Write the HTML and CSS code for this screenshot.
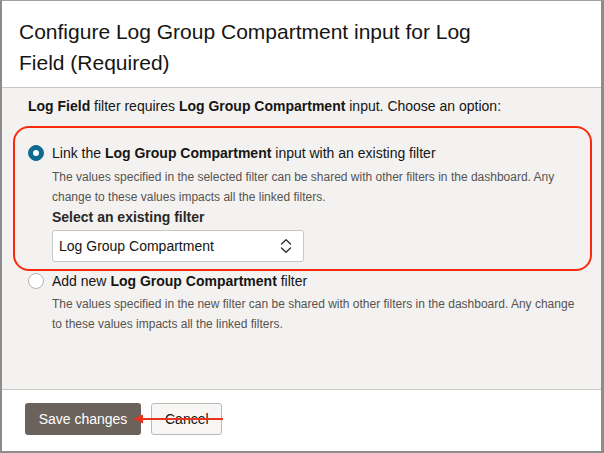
FILE: index.html
```html
<!DOCTYPE html>
<html>
<head>
<meta charset="utf-8">
<link rel="stylesheet" href="styles.css">
</head>
<body>
<div class="dialog">
  <div class="header">
    <h1 class="title">Configure Log Group Compartment input for Log Field (Required)</h1>
  </div>
  <div class="body">
    <p class="intro"><b>Log Field</b> filter requires <b>Log Group Compartment</b> input. Choose an option:</p>
    <div class="highlight">
      <div class="option">
        <span class="radio checked"></span>
        <div class="opt-content">
          <div class="opt-label">Link the <b>Log Group Compartment</b> input with an existing filter</div>
          <div class="opt-desc">The values specified in the selected filter can be shared with other filters in the dashboard. Any change to these values impacts all the linked filters.</div>
          <div class="field-label">Select an existing filter</div>
          <div class="select">
            <span>Log Group Compartment</span>
            <svg class="chev" width="12" height="16" viewBox="0 0 12 16"><path d="M1.5 6 L6 1.8 L10.5 6 M1.5 10 L6 14.2 L10.5 10" fill="none" stroke="#333" stroke-width="1.4" stroke-linecap="round" stroke-linejoin="round"/></svg>
          </div>
        </div>
      </div>
    </div>
    <div class="option second">
      <span class="radio"></span>
      <div class="opt-content">
        <div class="opt-label">Add new <b>Log Group Compartment</b> filter</div>
        <div class="opt-desc">The values specified in the new filter can be shared with other filters in the dashboard. Any change to these values impacts all the linked filters.</div>
      </div>
    </div>
  </div>
  <div class="footer">
    <button class="btn primary">Save changes</button>
    <button class="btn secondary">Cancel</button>
    <svg class="arrow" width="90" height="12" viewBox="0 0 90 12"><path d="M90 6 L8 6" stroke="#e8341c" stroke-width="2"/><path d="M0 6 L10 1.5 L10 10.5 Z" fill="#e8341c"/></svg>
  </div>
</div>
</body>
</html>
```

FILE: styles.css
```css
* { box-sizing: border-box; }
html, body { margin: 0; padding: 0; }
body {
  width: 604px;
  height: 453px;
  font-family: "Liberation Sans", Arial, sans-serif;
  color: #161513;
  background: #fff;
}
.dialog {
  width: 604px;
  height: 453px;
  border-left: 2px solid #8c8c8c;
  border-top: 1px solid #a0a0a0;
  border-right: 3px solid #8c8c8c;
  border-bottom: 2px solid #8c8c8c;
  display: flex;
  flex-direction: column;
  background: #fff;
}
.header {
  padding: 15px 20px 9px 17px;
  border-bottom: 1px solid #c9c7c4;
  background: #fff;
}
.title {
  margin: 0;
  max-width: 480px;
  font-size: 21px;
  font-weight: normal;
  line-height: 31px;
  color: #161513;
}
.body {
  flex: 1;
  background: #f3f2f1;
  padding: 8px 8px 0 11px;
}
.intro {
  margin: 0 0 10px 15px;
  font-size: 14px;
  line-height: 20px;
  color: #161513;
}
.intro b, .opt-label b { font-weight: bold; }
.highlight {
  border: 2px solid #fb2a0c;
  border-radius: 16px;
  padding: 15px 10px 7px 13px;
  margin-right: 1px;
}
.option {
  display: flex;
  align-items: flex-start;
}
.option.second {
  padding: 0 16px 0 15px;
}
.radio {
  flex: none;
  width: 16px;
  height: 16px;
  border-radius: 50%;
  border: 1px solid #b5b3b0;
  background: #fff;
  margin-top: 2px;
  margin-right: 8px;
  position: relative;
}
.radio.checked {
  background: #0e6b8f;
  border-color: #0e6b8f;
}
.radio.checked::after {
  content: "";
  position: absolute;
  left: 4px;
  top: 4px;
  width: 6px;
  height: 6px;
  border-radius: 50%;
  background: #fff;
}
.opt-content { flex: 1; }
.opt-label {
  font-size: 14px;
  line-height: 20px;
}
.opt-desc {
  font-size: 12px;
  line-height: 20px;
  color: #57534e;
  margin-top: 4px;
}
.second .opt-desc { margin-top: 3px; }
.field-label {
  font-size: 14px;
  font-weight: bold;
  line-height: 18px;
  margin-top: 1px;
  color: #2a2826;
}
.select {
  margin-top: 4px;
  width: 252px;
  height: 32px;
  background: #fff;
  border: 1px solid #c9c7c4;
  border-radius: 3px;
  display: flex;
  align-items: center;
  justify-content: space-between;
  padding: 0 11px 0 6px;
  font-size: 14px;
  color: #161513;
}
.chev { display: block; }
.footer {
  position: relative;
  height: 62px;
  border-top: 1px solid #c9c7c4;
  background: #fff;
  display: flex;
  align-items: center;
  gap: 10px;
  padding: 0 0 4px 23px;
}
.btn {
  font-family: inherit;
  font-size: 14px;
  height: 32px;
  border-radius: 3px;
  padding: 0 13px;
  cursor: pointer;
}
.primary {
  background: #6b625c;
  color: #fff;
  border: none;
  width: 116px;
}
.secondary {
  background: #f7f6f5;
  color: #161513;
  border: 1px solid #bdbab6;
  width: 71px;
}
.arrow {
  position: absolute;
  left: 131px;
  top: 23px;
}
```
